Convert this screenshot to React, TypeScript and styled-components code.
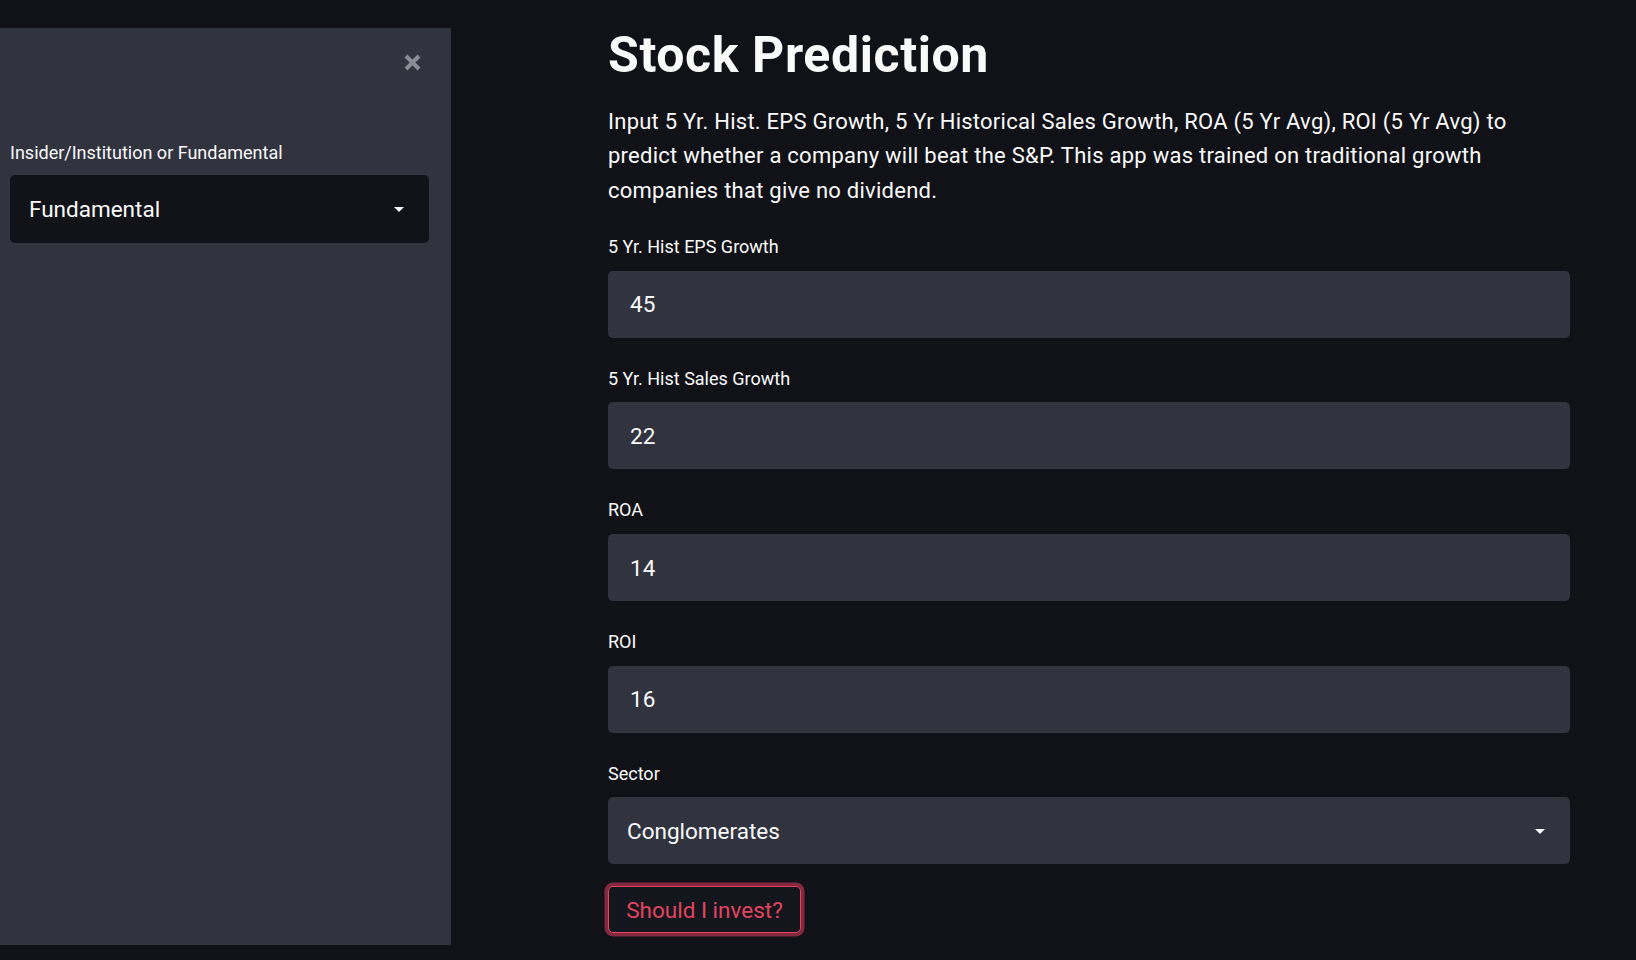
import React from "react";
import styled, { createGlobalStyle } from "styled-components";

const GlobalStyle = createGlobalStyle`
  body {
    margin: 0;
    background-color: #111218;
    font-family: Roboto, "Noto Sans", sans-serif;
    color: #fafafa;
  }
`;

const Page = styled.div`
  display: flex;
  align-items: flex-start;
  min-height: 100vh;
`;

const Sidebar = styled.aside`
  width: 451px;
  height: 917px;
  margin-top: 28px;
  background-color: #31333f;
  box-sizing: border-box;
  padding: 25px 22px 0 10px;
  display: flex;
  flex-direction: column;
`;

const CloseRow = styled.div`
  display: flex;
  justify-content: flex-end;
  padding-right: 7px;
  height: 19px;
`;

const CloseButton = styled.button`
  border: none;
  background: transparent;
  padding: 0;
  width: 19px;
  height: 19px;
  cursor: pointer;
  display: flex;
`;

const SidebarBody = styled.div`
  margin-top: 66px;
`;

const Main = styled.main`
  width: 962px;
  padding: 25px 0 0 157px;
`;

const Title = styled.h1`
  margin: 0;
  font-size: 50px;
  line-height: 60px;
  font-weight: 700;
  letter-spacing: 0.6px;
  color: #fafafa;
`;

const Intro = styled.p`
  margin: 20px 0 0;
  max-width: 905px;
  font-size: 22px;
  line-height: 34.4px;
  letter-spacing: 0.25px;
  color: #fafafa;
`;

const Form = styled.div`
  margin-top: 24px;
  display: flex;
  flex-direction: column;
  gap: 26px;
`;

const Field = styled.div`
  display: flex;
  flex-direction: column;
`;

interface LabelProps {
  $gap?: number;
}

const Label = styled.label<LabelProps>`
  font-size: 18px;
  line-height: 29.6px;
  color: #fafafa;
  margin-bottom: ${(p) => p.$gap ?? 9}px;
`;

interface BoxProps {
  $dark?: boolean;
  $height?: number;
}

const InputBox = styled.div<BoxProps>`
  height: ${(p) => p.$height ?? 67}px;
  box-sizing: border-box;
  border-radius: 5px;
  background-color: ${(p) => (p.$dark ? "#121318" : "#31333f")};
  display: flex;
  align-items: center;
  justify-content: space-between;
  padding: 0 22px;
  font-size: 22.5px;
  color: #fafafa;
`;

const SelectBox = styled(InputBox)`
  padding: 0 24px 0 19px;
`;

const Caret = styled.svg`
  width: 12px;
  height: 7px;
  margin-top: 2px;
`;

const SubmitButton = styled.button`
  align-self: flex-start;
  margin-top: -4px;
  width: 193px;
  height: 47px;
  border-radius: 5px;
  border: 1.5px solid #e2445f;
  box-shadow: 0 0 0 3.5px rgba(170, 48, 76, 0.75);
  background-color: #14161d;
  color: #e4435f;
  font-family: Roboto, "Noto Sans", sans-serif;
  font-size: 22.5px;
  cursor: pointer;
`;

const DownCaret = () => (
  <Caret viewBox="0 0 12 7">
    <path d="M1 1h10L6 6z" fill="#fafafa" />
  </Caret>
);

const fields = [
  { label: "5 Yr. Hist EPS Growth", value: "45" },
  { label: "5 Yr. Hist Sales Growth", value: "22" },
  { label: "ROA", value: "14" },
  { label: "ROI", value: "16" },
];

export default function App() {
  return (
    <>
      <GlobalStyle />
      <Page>
        <Sidebar>
          <CloseRow>
            <CloseButton aria-label="Close sidebar">
              <svg viewBox="0 0 19 19" width="19" height="19">
                <path
                  d="M3 3L16 16M16 3L3 16"
                  stroke="#8a8b93"
                  strokeWidth="4"
                  strokeLinecap="butt"
                />
              </svg>
            </CloseButton>
          </CloseRow>
          <SidebarBody>
            <Field>
              <Label $gap={7}>Insider/Institution or Fundamental</Label>
              <SelectBox $dark $height={68}>
                <span>Fundamental</span>
                <DownCaret />
              </SelectBox>
            </Field>
          </SidebarBody>
        </Sidebar>
        <Main>
          <Title>Stock Prediction</Title>
          <Intro>
            Input 5 Yr. Hist. EPS Growth, 5 Yr Historical Sales Growth, ROA (5
            Yr Avg), ROI (5 Yr Avg) to predict whether a company will beat the
            S&amp;P. This app was trained on traditional growth companies that
            give no dividend.
          </Intro>
          <Form>
            {fields.map((f) => (
              <Field key={f.label}>
                <Label>{f.label}</Label>
                <InputBox>{f.value}</InputBox>
              </Field>
            ))}
            <Field>
              <Label>Sector</Label>
              <SelectBox>
                <span>Conglomerates</span>
                <DownCaret />
              </SelectBox>
            </Field>
            <SubmitButton>Should I invest?</SubmitButton>
          </Form>
        </Main>
      </Page>
    </>
  );
}
